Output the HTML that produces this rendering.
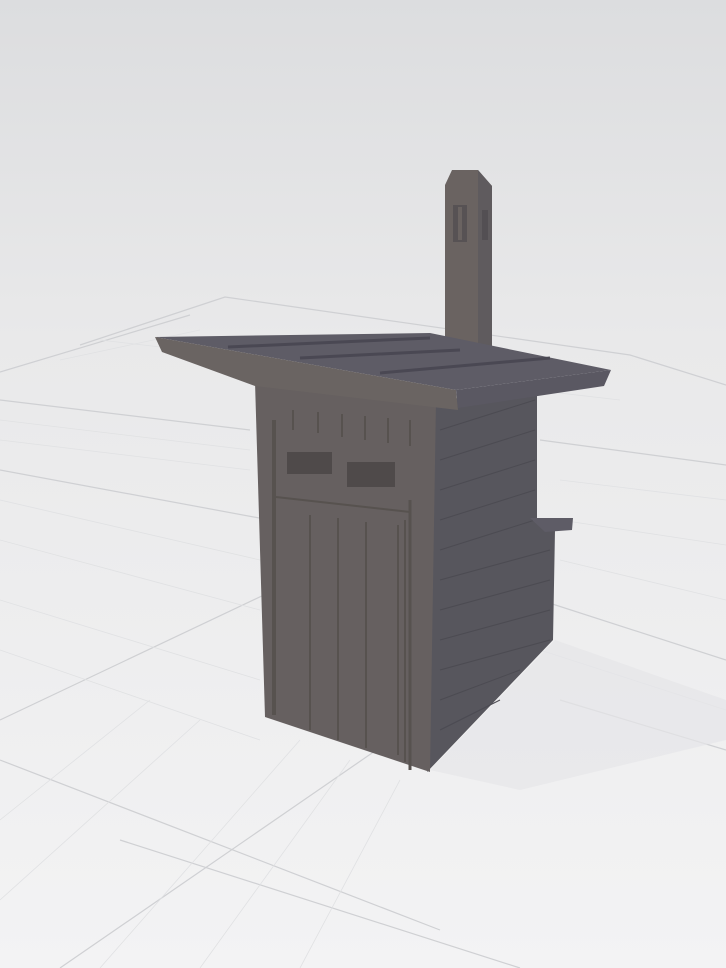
<!DOCTYPE html>
<html><head><meta charset="utf-8"><style>
html,body{margin:0;padding:0;width:726px;height:968px;overflow:hidden}
</style></head><body>
<svg width="726" height="968" viewBox="0 0 726 968" xmlns="http://www.w3.org/2000/svg">
<defs>
<linearGradient id="bg" x1="0" y1="0" x2="0" y2="1">
<stop offset="0" stop-color="#dcdddf"/><stop offset="0.35" stop-color="#e9e9ea"/><stop offset="1" stop-color="#f3f3f4"/>
</linearGradient>
</defs>
<rect width="726" height="968" fill="url(#bg)"/>
<g stroke="#cfd0d3" stroke-width="1.2" fill="none">
<path d="M80 345 L225 297 L630 355 L726 385"/>
<path d="M0 372 L190 315"/>
<path d="M0 470 L270 520"/>
<path d="M0 400 L250 430"/>
<path d="M0 720 L380 540"/>
<path d="M60 968 L420 720"/>
<path d="M120 840 L520 968"/>
<path d="M0 760 L440 930"/>
<path d="M540 600 L726 660"/>
<path d="M540 440 L726 465"/>
<path d="M560 700 L726 750"/>
</g>
<g stroke="#e0e1e3" stroke-width="0.8" fill="none">
<path d="M0 420 L250 450 M0 440 L250 470 M0 500 L260 560 M0 540 L260 610 M0 600 L260 680 M0 650 L260 740"/>
<path d="M100 968 L300 740 M200 968 L350 760 M300 968 L400 780 M0 900 L200 720 M0 820 L150 700"/>
<path d="M560 480 L726 500 M560 520 L726 545 M560 560 L726 600 M540 650 L726 710"/>
<path d="M100 340 L620 400 M60 360 L200 330"/>
</g>
<path d="M430 770 L555 640 L726 700 L726 740 L520 790 Z" fill="#e6e6e8" opacity="0.7"/>
<!-- chimney -->
<polygon points="445,185 452,170 478,170 492,186 492,355 445,355" fill="#6a6361"/>
<polygon points="478,170 492,186 492,355 478,355" fill="#5f5b5e"/>
<rect x="453" y="205" width="14" height="37" fill="#575254"/>
<rect x="458" y="207" width="4" height="33" fill="#6a6361"/>
<rect x="482" y="210" width="6" height="30" fill="#534f53"/>
<!-- right wall -->
<polygon points="432,400 537,393 537,520 555,530 553,640 427,772" fill="#57565d"/>
<g stroke="#4c4b52" stroke-width="1">
<path d="M440 430 L535 400 M440 460 L535 430 M440 490 L535 460 M440 520 L535 490 M440 550 L535 520 M440 580 L550 550 M440 610 L550 580 M440 640 L550 610 M440 670 L550 640 M440 700 L520 670 M440 730 L500 700"/>
</g>
<polygon points="530,518 573,518 572,530 545,532" fill="#5e5c66"/>
<!-- front wall -->
<polygon points="255,382 436,400 430,772 265,717" fill="#666060"/>
<rect x="272" y="420" width="4" height="295" fill="#57524f"/>
<rect x="287" y="452" width="45" height="22" fill="#4f4a4a"/>
<rect x="347" y="462" width="48" height="25" fill="#4f4a4a"/>
<path d="M276 497 L410 512" stroke="#57524f" stroke-width="2"/>
<g stroke="#57524f" stroke-width="2">
<path d="M310 515 L310 730 M338 518 L338 740 M366 522 L366 748 M398 525 L398 755 M405 520 L405 762"/>
<path d="M410 500 L410 770" stroke-width="3"/>
<path d="M293 410 L293 430 M318 412 L318 433 M342 414 L342 437 M365 416 L365 440 M388 418 L388 443 M410 420 L410 446"/>
</g>
<!-- roof -->
<polygon points="155,337 430,333 611,370 456,390" fill="#5e5c66"/>
<polygon points="155,337 456,390 458,410 255,386 162,352" fill="#6a6462"/>
<polygon points="456,390 611,370 604,386 458,408" fill="#5a5862"/>
<g stroke="#4a4853" stroke-width="3">
<path d="M228 347 L430 338 M300 358 L460 350 M380 373 L550 358"/>
</g>
</svg>
</body></html>
